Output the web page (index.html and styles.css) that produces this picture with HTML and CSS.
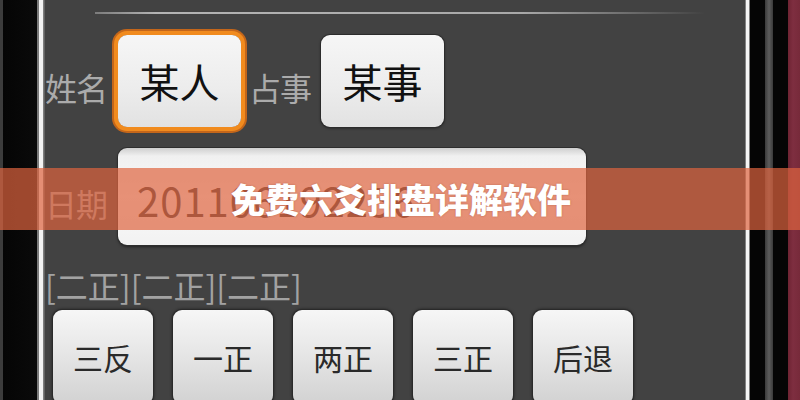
FILE: index.html
```html
<!DOCTYPE html>
<html lang="zh-CN">
<head>
<meta charset="utf-8">
<title>免费六爻排盘详解软件</title>
<link rel="stylesheet" href="styles.css">
</head>
<body>
<div class="screen">
  <div class="bezel-left"></div>
  <main class="content">
    <div class="divider"></div>
    <div class="row row-name">
      <span class="label">姓名</span>
      <button class="field-btn focused">某人</button>
      <span class="label">占事</span>
      <button class="field-btn">某事</button>
    </div>
    <div class="row row-date">
      <span class="label">日期</span>
      <div class="date-input">201106192256</div>
    </div>
    <div class="yao-line">[二正][二正][二正]</div>
    <div class="keys">
      <button class="key">三反</button>
      <button class="key">一正</button>
      <button class="key">两正</button>
      <button class="key">三正</button>
      <button class="key">后退</button>
    </div>
  </main>
  <div class="bezel-right"></div>
  <div class="banner">免费六爻排盘详解软件</div>
</div>
</body>
</html>
```
FILE: styles.css
```css
* { box-sizing: border-box; }
html, body {
  margin: 0;
  padding: 0;
  width: 800px;
  height: 400px;
  overflow: hidden;
  background: #000;
  font-family: "Noto Sans CJK SC", "Noto Sans", sans-serif;
}
.screen {
  position: relative;
  display: flex;
  width: 800px;
  height: 400px;
  overflow: hidden;
}
.bezel-left {
  width: 45px;
  flex: none;
  background: linear-gradient(to right,
    #3c3c3c 0, #3c3c3c 3px,
    #050505 3px, #0a0a0a 37px,
    #7a7a7a 37px, #7a7a7a 39px,
    #f2f2f2 39px, #f2f2f2 43px,
    #8a8a8a 43px, #555 45px);
}
.bezel-right {
  width: 55px;
  flex: none;
  background: linear-gradient(to right,
    #6a6a6a 0, #9a9a9a 1px,
    #f4f4f4 1px, #f4f4f4 4px,
    #050505 5px, #050505 20px,
    #3a3a3a 20px, #5c5c5c 24px, #3a3a3a 28px,
    #050505 28px, #050505 43px,
    #6e2433 43px, #7e2e40 48px, #772a3a 55px);
}
.content {
  width: 700px;
  flex: none;
  background: #424242;
  padding-top: 12px;
  display: flex;
  flex-direction: column;
}
.divider {
  height: 2px;
  flex: none;
  margin-left: 50px;
  width: 610px;
  background: linear-gradient(to right, rgba(180,180,180,0.5), #b4b4b4 10%, #a8a8a8 70%, rgba(160,160,160,0));
}
.row {
  display: flex;
  align-items: center;
}
.label {
  font-size: 32px;
  line-height: 40px;
  color: #ababab;
  width: 64px;
  flex: none;
  white-space: nowrap;
  padding-top: 12px;
  letter-spacing: -1px;
}
.row-name {
  margin-top: 21px;
  height: 92px;
  gap: 8px;
}
.field-btn {
  width: 123px;
  height: 92px;
  border: none;
  border-radius: 9px;
  background: linear-gradient(to bottom, #f6f6f6, #ececec 60%, #e2e2e2);
  box-shadow: 0 0 0 1px #2c2c2c, 0 1px 3px rgba(0,0,0,0.6);
  font-family: "Noto Sans CJK SC", sans-serif;
  font-size: 40px;
  color: #111;
  padding: 0;
  flex: none;
}
.field-btn.focused {
  box-shadow: 0 0 0 4px #f18b1e, 0 0 0 6px #c4661a;
  margin-left: 1px;
}
.row-date {
  margin-top: 21px;
  height: 97px;
  gap: 9px;
}
.date-input {
  width: 468px;
  height: 97px;
  border-radius: 9px;
  background: linear-gradient(to bottom, #cfcfcf 0, #f0f0f0 8px, #fafafa 50%, #f2f2f2 100%);
  box-shadow: 0 0 0 1px #2e2e2e, 0 2px 3px rgba(0,0,0,0.5);
  font-size: 40px;
  line-height: 97px;
  color: #3a3a3a;
  padding-left: 19px;
  padding-top: 4px;
  letter-spacing: 1px;
}
.yao-line {
  margin-top: 20px;
  height: 40px;
  font-size: 32px;
  line-height: 40px;
  color: #a2a2a2;
  white-space: nowrap;
}
.keys {
  margin-top: 5px;
  display: flex;
  gap: 20px;
  padding-left: 8px;
}
.key {
  width: 100px;
  height: 94px;
  flex: none;
  border: none;
  border-radius: 9px;
  background: linear-gradient(to bottom, #f6f6f6 0, #ececec 30%, #d2d2d2 100%);
  box-shadow: 0 0 0 1px #2a2a2a, 0 0 3px 1px rgba(0,0,0,0.5);
  font-family: "Noto Sans CJK SC", sans-serif;
  font-size: 30px;
  color: #2a2a2a;
  padding: 0;
  padding-bottom: 1px;
}
.banner {
  position: absolute;
  left: 0;
  top: 168px;
  width: 800px;
  height: 62px;
  background: rgba(222, 100, 62, 0.7);
  color: #fff;
  font-weight: 900;
  font-size: 34px;
  line-height: 62px;
  text-align: center;
  text-shadow: 0 0 2px rgba(120,40,20,0.4);
  padding-left: 2px;
}
```
